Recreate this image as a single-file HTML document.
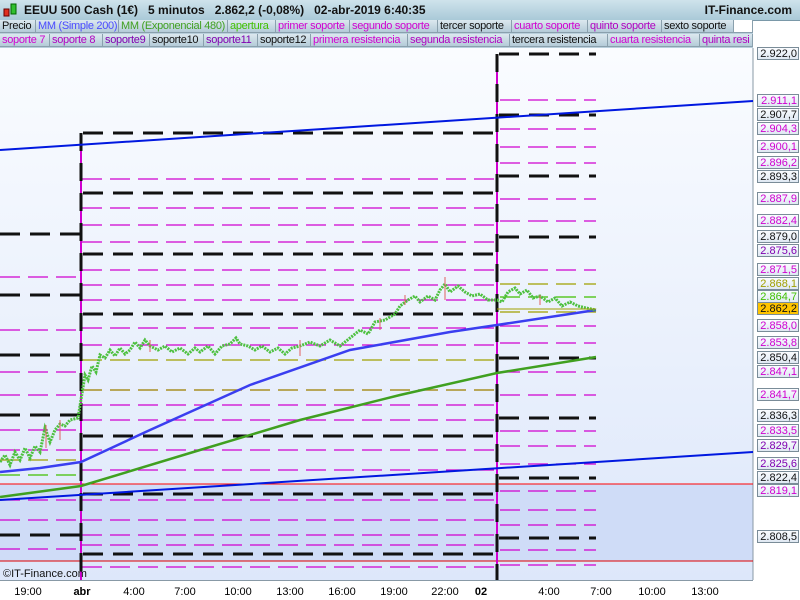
<!DOCTYPE html>
<html><head><meta charset="utf-8"><style>
body{margin:0;width:800px;height:600px;overflow:hidden;font-family:"Liberation Sans",sans-serif;background:#fff;position:relative}
.hdr{position:absolute;left:0;top:0;width:800px;height:20px;background:linear-gradient(#cfe3ec,#a9c9d8);border-bottom:1px solid #7a98a8;font-size:12px;font-weight:bold;color:#111}
.row{position:absolute;left:0;height:14px;width:753px;background:#b9cfdc;font-size:11px;line-height:13px;white-space:nowrap;overflow:hidden}
.row span{position:absolute;top:0;height:13px;border-right:1px solid #8aa0ad;border-bottom:1px solid #8aa0ad;padding-left:2px;background:linear-gradient(#dce8ef,#b4cbd8);overflow:hidden;letter-spacing:-0.3px;box-sizing:border-box}
.ax{position:absolute;left:0;top:581px;width:800px;height:19px;background:#fff;font-size:11px}
.ax span{position:absolute;top:5px;transform:translateX(-50%)}
.lb{position:absolute;left:757px;height:13px;border:1px solid #7a8c98;background:linear-gradient(#fafcff,#dfe8f2);font-size:11px;line-height:12px;text-align:right;padding-right:1px;box-sizing:border-box;width:42px}
</style></head><body>
<svg width="800" height="600" style="position:absolute;left:0;top:0">
<defs><linearGradient id="g" x1="0" y1="0" x2="0" y2="1"><stop offset="0" stop-color="#fafcff"/><stop offset="1" stop-color="#dde7fa"/></linearGradient></defs>
<rect x="0" y="48" width="753" height="532" fill="url(#g)"/>
<rect x="0" y="484" width="753" height="77" fill="#cfdcf7"/>
<rect x="753" y="48" width="47" height="532" fill="#fff"/>
<line x1="753" y1="48" x2="753" y2="580" stroke="#8899a6"/>
<line x1="0" y1="580.5" x2="753" y2="580.5" stroke="#8899a6"/>
<line x1="0" y1="484" x2="753" y2="484" stroke="#f00"/>
<line x1="0" y1="561" x2="753" y2="561" stroke="#d00"/>
<g stroke="#d000d0" stroke-width="1.3" stroke-dasharray="20 8">
<path d="M82 179H497M82 208H497M82 225H497M82 242H497M82 270H497M82 285H497M82 300H497M82 328H497M82 345H497M82 390H497M82 405H497M82 420H497M82 450H497M82 470H497M82 500H497M82 520H497M82 535H497M82 545H497M82 567H497"/>
<path d="M500 100H596M500 129H596M500 147H596M500 163H596M500 199H596M500 221H596M500 270H596M500 326H596M500 343H596M500 372H596M500 395H596M500 431H596M500 446H596M500 464H596M500 491H596M500 510H596M500 525H596M500 550H596M500 565H596"/>
<path d="M0 277H81M0 330H81M0 372H81M0 395H81M0 430H81M0 450H81M0 500H81M0 520H81M0 549H81"/>
</g>
<g stroke="#a0a000" stroke-width="1.3" stroke-dasharray="20 8"><path d="M82 360H497M82 390H497M0 460H81M500 284H596M500 312H596"/></g>
<g stroke="#40c000" stroke-width="1.3" stroke-dasharray="20 8"><path d="M0 475H81M500 297H596"/></g>
<g stroke="#111" stroke-width="3" stroke-dasharray="20 10">
<path d="M0 234H81M0 295H81M0 355H81M0 415H81M0 535H81"/>
<path d="M83 133H497M83 193H497M83 254H497M83 314H497M83 436H497M83 494H497M83 554H497"/>
<path d="M499 54H596M499 115H596M499 176H596M499 237H596M499 358H596M499 418H596M499 478H596M499 538H596"/>
</g>
<line x1="81" y1="145" x2="81" y2="580" stroke="#d000d0" stroke-width="2"/>
<line x1="497" y1="54" x2="497" y2="580" stroke="#d000d0" stroke-width="2"/>
<g stroke="#111" stroke-width="3" stroke-dasharray="18 12"><path d="M81 133V580M497 54V580"/></g>
<line x1="0" y1="150" x2="753" y2="101" stroke="#0018e0" stroke-width="2"/>
<line x1="0" y1="500" x2="753" y2="452" stroke="#0018e0" stroke-width="2"/>
<polyline fill="none" stroke="#3a3ef0" stroke-width="2.5" points="0,472 40,468 81,462 150,430 250,385 350,350 450,332 497,325 596,310"/>
<polyline fill="none" stroke="#40a020" stroke-width="2.5" points="0,497 81,486 200,450 300,420 400,395 497,373 596,357"/>
<polyline fill="none" stroke="#4ec040" stroke-width="3" stroke-dasharray="2 1" points="0,462 5,455 10,465 15,452 20,460 25,448 30,458 35,446 40,452 45,428 50,442 55,430 60,424 65,426 70,420 78,418 85,375 88,380 92,366 96,372 100,355 105,358 110,350 115,356 120,348 125,354 130,350 135,342 140,348 145,340 150,346 158,350 165,346 172,352 180,348 188,354 195,348 200,352 208,346 215,354 222,346 230,344 236,338 240,344 248,346 255,350 262,346 270,352 278,348 285,354 292,348 300,346 310,342 320,346 330,340 340,346 350,338 360,330 368,334 375,322 385,320 395,314 400,306 408,300 415,296 420,302 428,296 435,300 440,290 445,284 450,292 458,286 465,292 472,296 480,294 488,300 497,300 502,302 508,292 515,288 520,294 527,290 533,298 540,296 548,302 555,298 562,306 570,302 578,306 586,308 596,310"/>
<g stroke="#e06060" stroke-width="1"><path d="M445 277V300M46 425V448M60 420V440M405 295V305M380 318V330M540 295V305M150 340V352M300 340V356"/></g>
<line x1="497" y1="309" x2="596" y2="309" stroke="#a0a000"/>
</svg>
<div class="hdr"><svg width="16" height="16" style="position:absolute;left:3px;top:2px"><rect x="1" y="7" width="5" height="7" fill="#e03020" stroke="#600"/><rect x="8" y="2" width="5" height="10" fill="#30c030" stroke="#060"/></svg><span style="position:absolute;left:24px;top:3px">EEUU 500 Cash (1€) &nbsp; 5 minutos &nbsp; 2.862,2 (-0,08%) &nbsp; 02-abr-2019 6:40:35</span><span style="position:absolute;right:8px;top:3px">IT-Finance.com</span></div>
<div class="row" style="top:20px"><span style="left:0;width:36px;color:#111">Precio</span><span style="left:36px;width:83px;color:#4a4aff">MM (Simple 200)</span><span style="left:119px;width:109px;color:#40a020">MM (Exponencial 480)</span><span style="left:228px;width:48px;color:#40c000">apertura</span><span style="left:276px;width:74px;color:#d000d0">primer soporte</span><span style="left:350px;width:88px;color:#d000d0">segundo soporte</span><span style="left:438px;width:74px;color:#111">tercer soporte</span><span style="left:512px;width:76px;color:#d000d0">cuarto soporte</span><span style="left:588px;width:74px;color:#b000c0">quinto soporte</span><span style="left:662px;width:72px;color:#111">sexto soporte</span><span style="left:734px;width:19px;background:#fff"></span></div>
<div class="row" style="top:34px"><span style="left:0;width:50px;color:#d000d0">soporte 7</span><span style="left:50px;width:53px;color:#b000c0">soporte 8</span><span style="left:103px;width:47px;color:#8000b0">soporte9</span><span style="left:150px;width:54px;color:#111">soporte10</span><span style="left:204px;width:54px;color:#8000b0">soporte11</span><span style="left:258px;width:53px;color:#111">soporte12</span><span style="left:311px;width:97px;color:#d000d0">primera resistencia</span><span style="left:408px;width:102px;color:#b000c0">segunda resistencia</span><span style="left:510px;width:98px;color:#111">tercera resistencia</span><span style="left:608px;width:92px;color:#d000d0">cuarta resistencia</span><span style="left:700px;width:53px;color:#b000c0">quinta resi</span></div>
<div class="lb" style="top:47px;color:#111">2.922,0</div>
<div class="lb" style="top:94px;color:#d000d0">2.911,1</div>
<div class="lb" style="top:108px;color:#111">2.907,7</div>
<div class="lb" style="top:122px;color:#d000d0">2.904,3</div>
<div class="lb" style="top:140px;color:#d000d0">2.900,1</div>
<div class="lb" style="top:156px;color:#d000d0">2.896,2</div>
<div class="lb" style="top:170px;color:#111">2.893,3</div>
<div class="lb" style="top:192px;color:#d000d0">2.887,9</div>
<div class="lb" style="top:214px;color:#d000d0">2.882,4</div>
<div class="lb" style="top:230px;color:#111">2.879,0</div>
<div class="lb" style="top:244px;color:#8000b0">2.875,6</div>
<div class="lb" style="top:263px;color:#d000d0">2.871,5</div>
<div class="lb" style="top:277px;color:#a0a000">2.868,1</div>
<div class="lb" style="top:290px;color:#40c000">2.864,7</div>
<div class="lb" style="top:302px;color:#111;background:#ffc400">2.862,2</div>
<div class="lb" style="top:319px;color:#d000d0">2.858,0</div>
<div class="lb" style="top:336px;color:#d000d0">2.853,8</div>
<div class="lb" style="top:351px;color:#111">2.850,4</div>
<div class="lb" style="top:365px;color:#d000d0">2.847,1</div>
<div class="lb" style="top:388px;color:#d000d0">2.841,7</div>
<div class="lb" style="top:409px;color:#111">2.836,3</div>
<div class="lb" style="top:424px;color:#d000d0">2.833,5</div>
<div class="lb" style="top:439px;color:#8000b0">2.829,7</div>
<div class="lb" style="top:457px;color:#8000b0">2.825,6</div>
<div class="lb" style="top:471px;color:#111">2.822,4</div>
<div class="lb" style="top:484px;color:#d000d0">2.819,1</div>
<div class="lb" style="top:530px;color:#111">2.808,5</div>
<div style="position:absolute;left:3px;top:568px;font-size:11px;color:#111">©IT-Finance.com</div>
<div class="ax"><span style="left:28px">19:00</span><span style="left:82px;font-weight:bold">abr</span><span style="left:134px">4:00</span><span style="left:185px">7:00</span><span style="left:238px">10:00</span><span style="left:290px">13:00</span><span style="left:342px">16:00</span><span style="left:394px">19:00</span><span style="left:445px">22:00</span><span style="left:481px;font-weight:bold">02</span><span style="left:549px">4:00</span><span style="left:601px">7:00</span><span style="left:652px">10:00</span><span style="left:705px">13:00</span></div>
</body></html>
